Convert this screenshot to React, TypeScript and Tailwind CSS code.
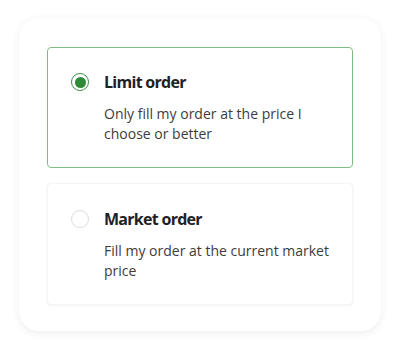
import React from "react";

type Option = { id: string; title: string; desc: string };

const options: Option[] = [
  { id: "limit", title: "Limit order", desc: "Only fill my order at the price I choose or better" },
  { id: "market", title: "Market order", desc: "Fill my order at the current market price" },
];

export default function App() {
  const selected = "limit";
  return (
    <div className="w-[400px] h-[350px] bg-white px-[19px] pt-[18px]" style={{ fontFamily: '"Open Sans", "Noto Sans", sans-serif' }}>
      <div className="w-[362px] rounded-[20px] bg-white px-[28px] pt-[29px] pb-[26px] shadow-[0_2px_10px_rgba(0,0,0,0.07)] flex flex-col gap-[15px]">
        {options.map((o) => {
          const isSel = o.id === selected;
          return (
            <div
              key={o.id}
              className={
                isSel
                  ? "rounded-[4px] border border-[#80bb81] bg-white pl-[23px] pr-[20px] pt-[22px] pb-[23px] flex items-start gap-[15px]"
                  : "rounded-[4px] border border-[#f5f5f7] bg-white pl-[23px] pr-[20px] pt-[23px] pb-[23px] flex items-start gap-[15px] shadow-[0_1px_3px_rgba(0,0,0,0.05)]"
              }
            >
              <div className="mt-[3px] shrink-0">
                {isSel ? (
                  <div className="w-[18px] h-[18px] rounded-full border-[1.5px] border-[#3e9244] flex items-center justify-center">
                    <div className="w-[11px] h-[11px] rounded-full bg-[#2f8a37]" />
                  </div>
                ) : (
                  <div className="w-[18px] h-[18px] rounded-full border-[1.5px] border-[#dcdce3]" />
                )}
              </div>
              <div className="flex flex-col">
                <div className="text-[16px] leading-[24px] font-bold text-[#1e2126] tracking-[-0.045em]">{o.title}</div>
                <div className="mt-[10px] text-[14px] leading-[20px] text-[#3c3c3c]">{o.desc}</div>
              </div>
            </div>
          );
        })}
      </div>
    </div>
  );
}
